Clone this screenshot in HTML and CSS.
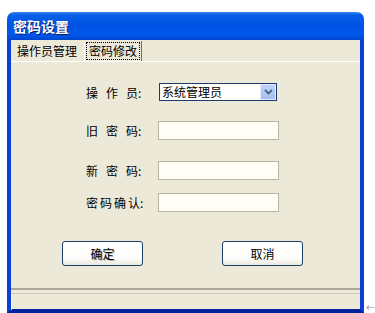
FILE: index.html
```html
<!DOCTYPE html>
<html lang="zh-CN">
<head>
    <meta charset="UTF-8">
    <meta name="viewport" content="width=device-width, initial-scale=1.0">
    <title>密码设置</title>
    <link rel="stylesheet" href="styles.css">
</head>
<body>
    <div class="screen">
        <div class="window">
            <div class="titlebar">密码设置</div>
            <div class="client">
                <div class="tabs">
                    <div class="tab">操作员管理</div>
                    <div class="tab active"><span class="focus">密码修改</span></div>
                </div>
                <div class="panel">
                    <div class="row row-first">
                        <label class="label"><span class="wide">操作</span>员:</label>
                        <div class="select">
                            <span class="select-text">系统管理员</span>
                            <span class="select-btn">
                                <svg width="9" height="6" viewBox="0 0 9 6"><path d="M1 1 L4.5 4.5 L8 1" fill="none" stroke="#4d6185" stroke-width="1.8"/></svg>
                            </span>
                        </div>
                    </div>
                    <div class="row row-old">
                        <label class="label"><span class="wide">旧密</span>码:</label>
                        <input class="field" type="password">
                    </div>
                    <div class="row row-new">
                        <label class="label"><span class="wide">新密</span>码:</label>
                        <input class="field" type="password">
                    </div>
                    <div class="row row-confirm">
                        <label class="label"><span class="tight">密码确</span>认:</label>
                        <input class="field" type="password">
                    </div>
                    <div class="buttons">
                        <button class="btn btn-default">确定</button>
                        <button class="btn">取消</button>
                    </div>
                </div>
                <div class="statusbar"><div class="status-inner"></div></div>
            </div>
        </div>
        <span class="size-arrow">&larr;</span>
    </div>
</body>
</html>
```

FILE: styles.css
```css
body {
    margin: 0;
    background: #fff;
    font-family: "Noto Sans CJK SC", "DejaVu Sans", sans-serif;
    font-size: 12px;
    color: #000;
}

.screen {
    display: flex;
    align-items: flex-end;
    height: 313px;
    overflow: hidden;
}

.window {
    margin: 8px 0 0 7px;
    width: 359px;
    height: 301px;
    display: flex;
    flex-direction: column;
}

.titlebar {
    height: 28px;
    line-height: 28px;
    padding-left: 6px;
    color: #fff;
    font-size: 14px;
    font-weight: bold;
    border-radius: 7px 7px 0 0;
    background: linear-gradient(to bottom, #3b8cf5 0%, #0a5fe8 10%, #0054e3 45%, #0058ec 80%, #0046cc 100%);
    text-shadow: 1px 1px 0 #0a1e6e;
}

.client {
    flex: 1;
    display: flex;
    flex-direction: column;
    background: #ece9d8;
    border: 4px solid #0a3fd8;
    border-top: none;
    border-bottom-color: #00239c;
}

.tabs {
    height: 21px;
    display: flex;
    align-items: flex-end;
}

.tab {
    height: 20px;
    line-height: 19px;
    padding: 0 6px;
}

.tab.active {
    margin-left: 1px;
    padding: 0 1px;
    border-left: 1px solid #fff;
    border-right: 1px solid #716f64;
    display: flex;
    align-items: center;
}

.focus {
    display: block;
    height: 16px;
    line-height: 15px;
    padding: 0 2px;
    border: 1px dotted #000;
}

.panel {
    flex: 1;
    border-top: 1px solid #fff;
    padding-left: 75px;
}

.row {
    display: flex;
    align-items: center;
}

.row-first { margin-top: 21px; height: 18px; }
.row-old { margin-top: 20px; }
.row-new { margin-top: 21px; }
.row-confirm { margin-top: 13px; }

.label {
    width: 72px;
    white-space: nowrap;
}

.wide { letter-spacing: 8px; }
.tight { letter-spacing: 2px; }

.select {
    margin-left: 1px;
    width: 118px;
    height: 18px;
    box-sizing: border-box;
    border: 1px solid #1c3a6e;
    background: #fff;
    display: flex;
    align-items: center;
    justify-content: space-between;
}

.select-text {
    padding-left: 2px;
    line-height: 16px;
}

.select-btn {
    width: 16px;
    height: 16px;
    box-sizing: border-box;
    border: 1px solid #e4ecfc;
    background: linear-gradient(to bottom, #c1d3fb, #a5bdf0);
    display: flex;
    align-items: center;
    justify-content: center;
}

.field {
    width: 121px;
    height: 19px;
    box-sizing: border-box;
    margin: 0;
    border: 1px solid #b8b4a2;
    background: #fffdf6;
    padding: 0 2px;
}

.buttons {
    display: flex;
    gap: 79px;
    margin: 29px 0 0 -24px;
}

.btn {
    width: 81px;
    height: 25px;
    margin: 0;
    padding: 0;
    font-family: inherit;
    font-size: 12px;
    border: 1px solid #1f3e66;
    border-radius: 3px;
    background: linear-gradient(to bottom, #ffffff 0%, #fdfdfb 70%, #ebe8dd 100%);
}

.btn-default {
    text-shadow: 1px 1px 0 #b9b9b9;
}

.statusbar {
    height: 21px;
    box-sizing: border-box;
    border-top: 2px solid #aca899;
    padding-top: 3px;
}

.status-inner {
    height: 100%;
    border-top: 1px solid #cbc7b4;
    border-left: 1px solid #f6f5ee;
}

.size-arrow {
    margin: 0 0 1px 2px;
    color: #8a8a8a;
    font-size: 9px;
    line-height: 9px;
}
```
